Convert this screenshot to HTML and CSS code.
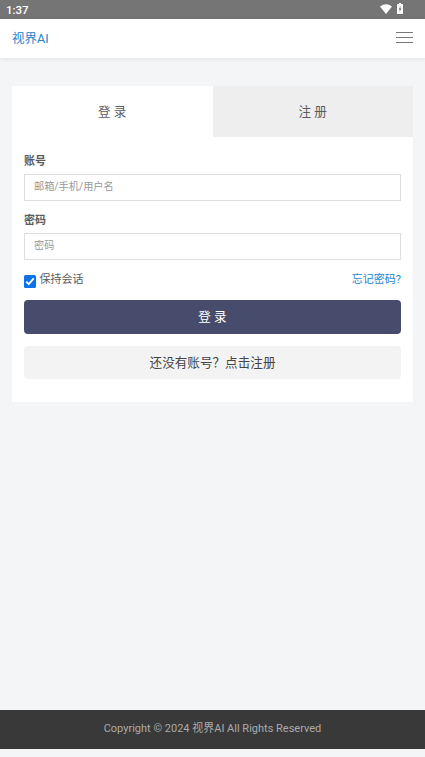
FILE: index.html
```html
<!DOCTYPE html>
<html lang="zh-CN">
<head>
<meta charset="utf-8">
<meta name="viewport" content="width=device-width, initial-scale=1">
<title>视界AI</title>
<link rel="stylesheet" href="styles.css">
</head>
<body>
<div class="statusbar">
  <span class="clock">1:37</span>
  <span class="indicators">
    <svg width="12" height="10" viewBox="0 0 12 10"><path fill="#fff" d="M0 2.600C3.600-.7 8.400-.7 12 2.600L6 10z"/></svg>
    <svg width="6" height="11" viewBox="0 0 6 11"><path fill="#fff" d="M2 0h2v1h1.200q.8 0 .8.8v8.400q0 .8-.8.8H.8q-.8 0-.8-.8V1.800Q0 1 .8 1H2z"/><path fill="#757575" d="M3.500 3 1.600 6.400h1V9l1.900-3.500h-1z"/></svg>
  </span>
</div>
<header class="navbar">
  <a class="brand">视界AI</a>
  <span class="menu"><i></i><i></i><i></i></span>
</header>
<main class="page">
  <section class="card">
    <nav class="tabs">
      <a class="tab">登 录</a>
      <a class="tab tab-idle">注 册</a>
    </nav>
    <form class="form">
      <label class="label" for="account">账号</label>
      <input class="field" id="account" type="text" placeholder="邮箱/手机/用户名">
      <label class="label" for="password">密码</label>
      <input class="field" id="password" type="password" placeholder="密码">
      <div class="options">
        <label class="remember">
          <svg class="check" width="12" height="13" viewBox="0 0 12 13"><rect width="12" height="13" rx="1.500" fill="#0b72e7"/><path d="M2.300 6.700 4.800 9.200 9.700 3.400" fill="none" stroke="#fff" stroke-width="1.900"/></svg>
          <span>保持会话</span>
        </label>
        <a class="forgot">忘记密码?</a>
      </div>
      <button class="btn primary" type="button">登 录</button>
      <button class="btn secondary" type="button">还没有账号？点击注册</button>
    </form>
  </section>
</main>
<footer class="footer">Copyright © 2024 视界AI All Rights Reserved</footer>
</body>
</html>
```
FILE: styles.css
```css
* { box-sizing: border-box; }
body {
  margin: 0;
  height: 757px;
  padding-bottom: 8px;
  display: flex;
  flex-direction: column;
  overflow: hidden;
  background: #f4f5f7;
  color: #5c5c5c;
  font-family: Roboto, "Noto Sans CJK SC", sans-serif;
  font-size: 11px;
}
.statusbar {
  flex: none;
  height: 19px;
  display: flex;
  align-items: center;
  justify-content: space-between;
  padding: 0 22px 0 6px;
  background: #757575;
  color: #fff;
}
.clock { font-size: 11.5px; font-weight: 500; line-height: 18px; }
.indicators { display: flex; align-items: center; gap: 5px; height: 18px; padding-bottom: 2px; }
.navbar {
  flex: none;
  height: 39px;
  display: flex;
  align-items: center;
  justify-content: space-between;
  padding: 0 12px;
  background: #fff;
  box-shadow: 0 1px 5px rgba(0, 0, 0, .08);
}
.brand { color: #2283cf; font-size: 12.5px; line-height: 38px; }
.menu { display: flex; flex-direction: column; gap: 4px; width: 17px; margin-bottom: 3px; }
.menu i { height: 1px; background: #777; }
.page { flex: 1; padding: 28px 12px 0; }
.card { height: 316px; background: #fff; }
.tabs { display: flex; height: 51px; }
.tab {
  flex: 1;
  text-align: center;
  font-size: 12.6px;
  line-height: 51px;
}
.tab-idle { background: #eee; }
.form { padding: 17px 12px 0; }
.label { display: block; height: 16px; line-height: 16px; font-size: 11px; font-weight: 700; }
.field {
  display: block;
  width: 100%;
  height: 27px;
  margin: 4px 0 12px;
  padding: 0 9px 3px;
  border: 1px solid #ddd;
  outline: 0;
  background: #fff;
  color: #555;
  font: 10.2px Roboto, "Noto Sans CJK SC", sans-serif;
}
.field::placeholder { color: #999; opacity: 1; }
.options { display: flex; justify-content: space-between; height: 28px; line-height: 16px; }
.remember { display: flex; gap: 3.5px; }
.check { margin-top: 3px; }
.forgot { color: #2283cf; }
.btn {
  display: block;
  width: 100%;
  border: 0;
  border-radius: 4px;
  font: 12.6px Roboto, "Noto Sans CJK SC", sans-serif;
}
.primary { height: 34px; margin-bottom: 12px; padding: 0 0 3px; background: #484c6c; color: #fff; }
.secondary { height: 33px; padding: 0 0 3px; background: #f3f3f3; color: #444; }
.footer {
  flex: none;
  height: 39px;
  background: #393939;
  color: #aaa;
  text-align: center;
  font-size: 11px;
  line-height: 38px;
}
```
